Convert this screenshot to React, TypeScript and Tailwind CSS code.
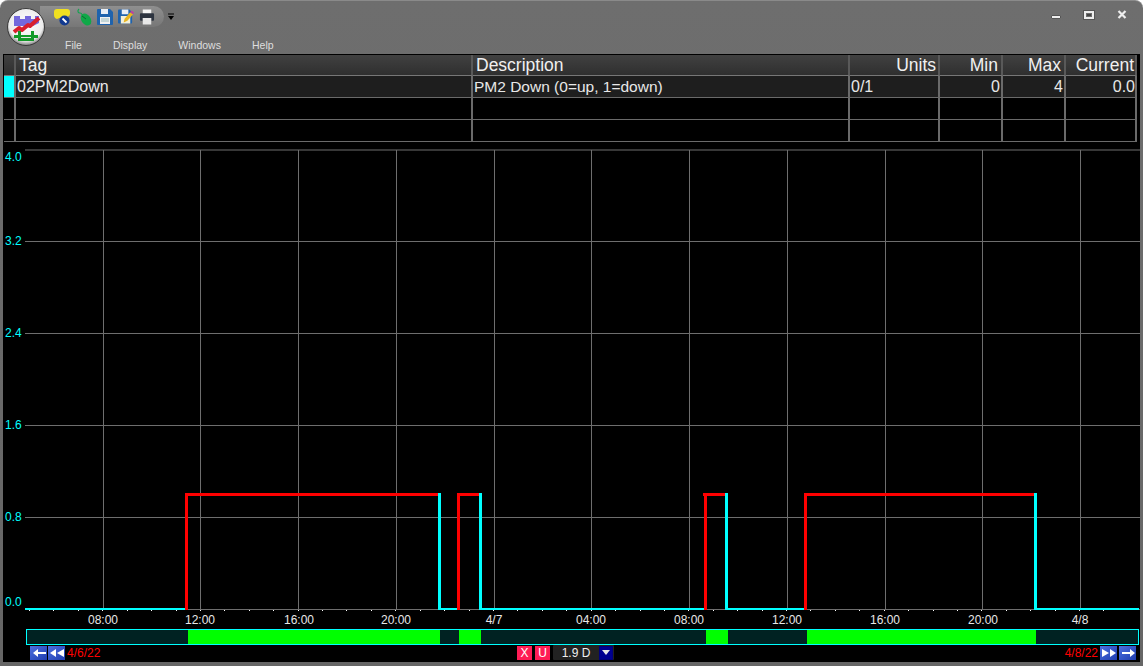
const font = { fontFamily: '"Liberation Sans", Arial, sans-serif' };

function Logo() {
  return (
    <svg width="40" height="40" viewBox="0 0 40 40" className="block">
      <defs>
        <radialGradient id="lg" cx="50%" cy="42%" r="58%">
          <stop offset="0%" stopColor="#ffffff" />
          <stop offset="78%" stopColor="#ececec" />
          <stop offset="100%" stopColor="#7d7d7d" />
        </radialGradient>
      </defs>
      <circle cx="20" cy="20" r="18.5" fill="url(#lg)" stroke="#3a3a3a" strokeWidth="1" />
      <path d="M8 9h6v3h5V9h6v3h4V9h4v7l-6 3H8z" fill="#7468dc" />
      <path d="M8 25l5-4 3 2 6-5 2 1 9-8" fill="none" stroke="#d81f2c" strokeWidth="4" strokeLinejoin="round" />
      <path d="M12 24h3v4h10v-4h3v4h4v3h-4v3H12v-3H8v-3h4z" fill="#129a28" />
      <path d="M15 31h10v-1H15z" fill="#e8e8e8" />
    </svg>
  );
}

function ToolIcons() {
  return (
    <>
      <svg width="17" height="18" viewBox="0 0 17 18">
        <path d="M0 4q0-3 3-3h10q3 0 3 3v2q0 2-3 3H8l-5 2q-3-1-3-4z" fill="#f0e020" />
        <circle cx="10.5" cy="12.5" r="5" fill="#123a90" />
        <path d="M8.5 10.5l4 4" stroke="#fff" strokeWidth="1.8" />
      </svg>
      <svg width="16" height="18" viewBox="0 0 16 18">
        <path d="M3 1C1 3 2 5 4 5s2 2 3 3" fill="none" stroke="#15a050" strokeWidth="1.2" />
        <ellipse cx="10" cy="11.5" rx="4.6" ry="6.5" transform="rotate(-35 10 11.5)" fill="#10a848" />
        <path d="M6 8l4 3" stroke="#0b6a30" strokeWidth="1" />
      </svg>
      <svg width="16" height="16" viewBox="0 0 16 16">
        <path d="M0 1q0-1 1-1h12l3 3v12q0 1-1 1H1q-1 0-1-1z" fill="#1f63ad" />
        <path d="M4 0h7v5H4z" fill="#e9eef5" />
        <path d="M3 8h10v7H3z" fill="#f1f1f1" />
        <path d="M4 10h8M4 12h8" stroke="#9bb" strokeWidth="1" />
      </svg>
      <svg width="16" height="17" viewBox="0 0 17 17">
        <path d="M0 2q0-1 1-1h11l3 3v11q0 1-1 1H1q-1 0-1-1z" fill="#1f63ad" />
        <path d="M4 1h7v5H4z" fill="#e9eef5" />
        <path d="M3 8h10v8H3z" fill="#f4f0d8" />
        <path d="M6 15l1-4 6-7 3 2-6 7z" fill="#e8b520" />
        <path d="M13 4l1-2 3 2-1 2z" fill="#c040a0" />
      </svg>
      <svg width="16" height="16" viewBox="0 0 17 16">
        <path d="M4 0h9v5H4z" fill="#f5f5f5" />
        <path d="M1 5q0-1 1-1h13q1 0 1 1v6q0 1-1 1h-2V9H4v3H2q-1 0-1-1z" fill="#2d3440" />
        <path d="M4 9h9v7H4z" fill="#e8e8e8" />
      </svg>
    </>
  );
}

function Arrow({ kind }: { kind: "left" | "rew" | "ff" | "right" }) {
  const d = {
    left: "M2 7l5-4v3h8v2H7v3z",
    rew: "M1 7l6-4v8zM8 7l7-4v8z",
    ff: "M15 7L9 3v8zM8 7L1 3v8z",
    right: "M15 7l-5-4v3H2v2h8v3z",
  }[kind];
  return (
    <span className="flex h-[14px] w-[17px] items-center justify-center bg-gradient-to-br from-[#4d6fe0] to-[#1f3cb0]">
      <svg width="16" height="14" viewBox="0 0 16 14">
        <path d={d} fill="#fff" />
      </svg>
    </span>
  );
}

const cols = "grid grid-cols-[12px_457px_377px_90px_63px_63px_71px]";
const head = "flex h-[21px] items-end border-r-2 border-b border-r-[#595959] border-b-[#777] bg-gradient-to-b from-[#414141] to-[#2f2f2f] text-[17.5px] leading-[20px] text-[#f0f0f0]";
const cellBase = "flex h-[22px] items-center border-r-2 border-b border-[#6a6a6a] pt-px text-[#e8e8e8]";
const cell = `${cellBase} text-[16px]`;

function Row({ first }: { first?: boolean }) {
  const bg = first ? "bg-[#1e1e1e]" : "bg-black";
  return (
    <div className={cols}>
      <div className={`h-[22px] border-r-2 border-b border-[#6a6a6a] ${first ? "bg-[#00ffff]" : "bg-black"}`} />
      <div className={`${cell} ${bg} pl-px`}>{first ? "02PM2Down" : ""}</div>
      <div className={`${cellBase} ${bg} pl-px text-[15.5px]`}>{first ? "PM2 Down (0=up, 1=down)" : ""}</div>
      <div className={`${cell} ${bg} pl-px`}>{first ? "0/1" : ""}</div>
      <div className={`${cell} ${bg} justify-end pr-px`}>{first ? "0" : ""}</div>
      <div className={`${cell} ${bg} justify-end pr-px`}>{first ? "4" : ""}</div>
      <div className={`${cell} ${bg} justify-end`}>{first ? "0.0" : ""}</div>
    </div>
  );
}

const vGrid = [103, 200.5, 298, 396, 494, 591, 689, 787, 885, 982, 1080];
const hGrid = [241, 333, 425, 517];
const yLabels: [string, number][] = [["4.0", 161], ["3.2", 245], ["2.4", 337], ["1.6", 429], ["0.8", 521], ["0.0", 606]];
const xLabels: [string, number][] = [["08:00", 103], ["12:00", 200], ["16:00", 299], ["20:00", 396], ["4/7", 494], ["04:00", 591], ["08:00", 689], ["12:00", 787], ["16:00", 885], ["20:00", 983], ["4/8", 1080]];
const ticks = Array.from({ length: 45 }, (_, i) => 29.5 + i * 24.42);
const cyanH: [number, number][] = [[25, 186], [438, 459], [479, 705], [725, 806], [1034, 1139]];
const redH: [number, number][] = [[185, 441], [457, 482], [703, 728], [804, 1037]];
const redV = [186.5, 458.5, 705, 805.5];
const cyanV = [439.5, 480.5, 726.5, 1035.5];

function Chart() {
  return (
    <svg width="1137" height="487" viewBox="3 142 1137 487" className="block shrink-0">
      <rect x="3" y="142" width="1137" height="487" fill="#000" />
      <line x1="25" x2="1140" y1="150" y2="150" stroke="#6e6e6e" />
      {hGrid.map((y) => (
        <line key={y} x1="25" x2="1140" y1={y + 0.5} y2={y + 0.5} stroke="#6e6e6e" />
      ))}
      <line x1="25" x2="1140" y1="609.5" y2="609.5" stroke="#6e6e6e" />
      {vGrid.map((x) => (
        <line key={x} x1={Math.floor(x) + 0.5} x2={Math.floor(x) + 0.5} y1="150" y2="610" stroke="#6e6e6e" />
      ))}
      {ticks.map((x) => (
        <line key={x} x1={Math.floor(x) + 0.5} x2={Math.floor(x) + 0.5} y1="610" y2="611" stroke="#fff" />
      ))}
      {yLabels.map(([t, y]) => (
        <text key={t} x="5" y={y} fill="#00ffff" fontSize="12" style={font}>{t}</text>
      ))}
      {xLabels.map(([t, x], i) => (
        <text key={i} x={x} y="624" fill="#e8e8e8" fontSize="12" textAnchor="middle" style={font}>{t}</text>
      ))}
      {cyanH.map(([a, b]) => (
        <rect key={a} x={a} width={b - a} y="608" height="2" fill="#00ffff" />
      ))}
      {redH.map(([a, b]) => (
        <rect key={a} x={a} width={b - a} y="493" height="3" fill="#ff0000" />
      ))}
      {cyanV.map((x) => (
        <rect key={x} x={Math.floor(x) - 1} width="3" y="493" height="117" fill="#00ffff" />
      ))}
      {redV.map((x) => (
        <rect key={x} x={Math.floor(x) - 1} width="3" y="493" height="117" fill="#ff0000" />
      ))}
    </svg>
  );
}

export default function App() {
  return (
    <div className="relative flex h-[666px] w-[1143px] flex-col overflow-hidden rounded-t-[8px] border-t border-[#8a8a8a] bg-gradient-to-b from-[#6e6e6e] to-[#666666]" style={font}>
      <header className="flex h-[53px] shrink-0">
        <div className="z-10 ml-[6px] mt-[6px] h-[40px] w-[40px] shrink-0">
          <Logo />
        </div>
        <div className="flex flex-1 flex-col">
          <div className="flex items-start">
            <div className="-ml-[6px] mt-[5px] flex h-[21px] w-[124px] items-center gap-[5px] rounded-r-full rounded-l-[10px] bg-gradient-to-b from-[#8f8f8f] to-[#777777] pl-[14px]">
              <ToolIcons />
            </div>
            <svg width="8" height="10" viewBox="0 0 8 10" className="ml-[3px] mt-[12px]">
              <path d="M1 1h6" stroke="#000" />
              <path d="M1 3h6L4 7z" fill="#000" />
            </svg>
            <div className="ml-auto mr-[16px] mt-[9px] flex items-center gap-[23px]">
              <span className="mt-[5px] block h-[4px] w-[10px] rounded-[1px] border border-[#555] bg-[#eee]" />
              <span className="flex h-[8px] w-[10px] items-center justify-center border-2 border-[#eee] outline outline-[#555]">
                <span className="block h-[2px] w-[4px] bg-[#444]" />
              </span>
              <svg width="10" height="9" viewBox="0 0 10 9">
                <path d="M1.5 1l7 7M8.5 1l-7 7" stroke="#eee" strokeWidth="2.2" />
              </svg>
            </div>
          </div>
          <nav className="mt-[12px] flex text-[10.5px] leading-[13px] text-[#dedede]">
            <span className="ml-[19px]">File</span>
            <span className="ml-[31px]">Display</span>
            <span className="ml-[31px]">Windows</span>
            <span className="ml-[31px]">Help</span>
          </nav>
        </div>
      </header>
      <main className="ml-[3px] flex h-[608px] w-[1137px] shrink-0 flex-col bg-black">
        <div className="pl-px pt-[1px]">
          <div className={cols}>
            <div className={`${head}`} />
            <div className={`${head} pl-[3px]`}>Tag</div>
            <div className={`${head} pl-[3px]`}>Description</div>
            <div className={`${head} justify-end pr-[2px]`}>Units</div>
            <div className={`${head} justify-end pr-[3px]`}>Min</div>
            <div className={`${head} justify-end pr-[3px]`}>Max</div>
            <div className={`${head} justify-end pr-px`}>Current</div>
          </div>
          <Row first />
          <Row />
          <Row />
        </div>
        <Chart />
        <div className="ml-[23px] flex h-[16px] w-[1113px] shrink-0 border border-[#00ffff] bg-[#002222]">
          <div className="w-[161px]" />
          <div className="w-[252px] bg-[#00ff00]" />
          <div className="w-[19px]" />
          <div className="w-[22px] bg-[#00ff00]" />
          <div className="w-[225px]" />
          <div className="w-[22px] bg-[#00ff00]" />
          <div className="w-[79px]" />
          <div className="w-[229px] bg-[#00ff00]" />
        </div>
        <div className="flex h-[15px] shrink-0 items-end pl-[27px] pr-[4px] text-[12px] leading-[14px] text-[#ff0000]">
          <div className="flex gap-[1px]">
            <Arrow kind="left" />
            <Arrow kind="rew" />
          </div>
          <span className="ml-[2px] w-[450px]">4/6/22</span>
          <div className="flex h-[14px] w-[15px] items-center justify-center bg-[#ff1c55] text-[#fff]">X</div>
          <div className="ml-[3px] flex h-[14px] w-[15px] items-center justify-center bg-[#ff1c55] text-[#fff]">U</div>
          <div className="ml-[3px] flex h-[15px] w-[61px] items-center rounded-[1px] bg-[#222] text-[#eee]">
            <span className="w-[46px] text-center">1.9 D</span>
            <span className="flex h-[14px] w-[14px] items-center justify-center border border-[#00007a] bg-[#000090]">
              <svg width="8" height="5" viewBox="0 0 8 5"><path d="M0 0h8L4 5z" fill="#e8e8e8" /></svg>
            </span>
          </div>
          <span className="ml-auto mr-[2px]">4/8/22</span>
          <div className="flex gap-[2px]">
            <Arrow kind="ff" />
            <Arrow kind="right" />
          </div>
        </div>
      </main>
    </div>
  );
}
